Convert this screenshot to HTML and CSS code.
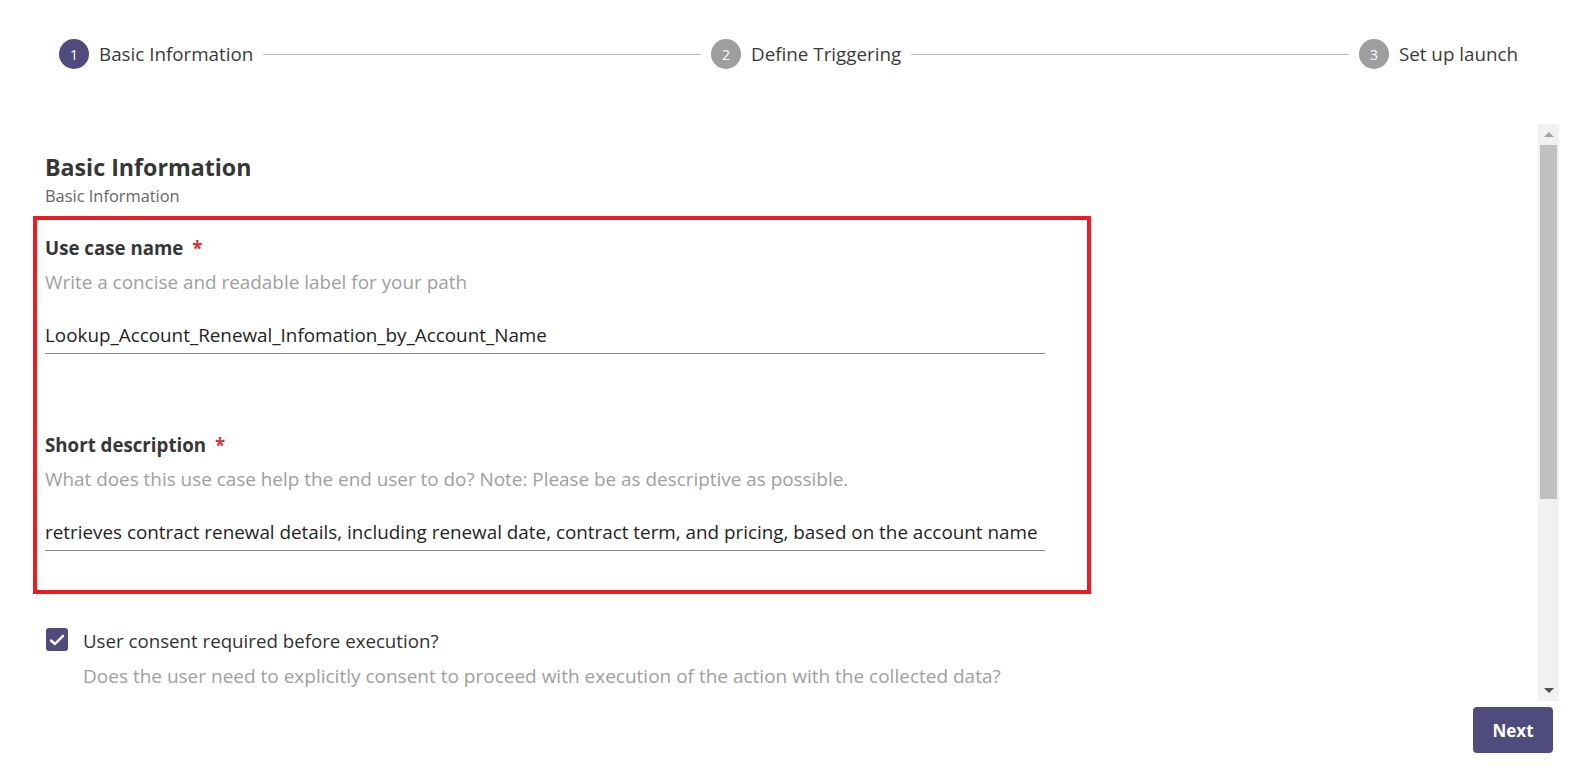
FILE: index.html
```html
<!DOCTYPE html>
<html lang="en">
<head>
<meta charset="utf-8">
<title>Basic Information</title>
<link rel="stylesheet" href="styles.css">
</head>
<body>
<div class="page">
  <div class="stepper">
    <div class="step">
      <span class="step-num active">1</span>
      <span class="step-label">Basic Information</span>
    </div>
    <div class="connector"></div>
    <div class="step">
      <span class="step-num">2</span>
      <span class="step-label">Define Triggering</span>
    </div>
    <div class="connector"></div>
    <div class="step">
      <span class="step-num">3</span>
      <span class="step-label">Set up launch</span>
    </div>
  </div>

  <div class="body">
    <div class="content">
      <div class="section-head">
        <h1 class="title">Basic Information</h1>
        <div class="subtitle">Basic Information</div>
      </div>
      <div class="highlight">
        <div class="field">
          <div class="label">Use case name <span class="req">*</span></div>
          <div class="hint">Write a concise and readable label for your path</div>
          <div class="input">Lookup_Account_Renewal_Infomation_by_Account_Name</div>
        </div>
        <div class="field field-second">
          <div class="label">Short description <span class="req">*</span></div>
          <div class="hint">What does this use case help the end user to do? Note: Please be as descriptive as possible.</div>
          <div class="input">retrieves contract renewal details, including renewal date, contract term, and pricing, based on the account name</div>
        </div>
      </div>
      <div class="consent">
        <span class="checkbox">
          <svg width="18" height="18" viewBox="0 0 18 18"><path d="M3 9.5 L7 13 L15 4.8" fill="none" stroke="#fff" stroke-width="2.5" stroke-linecap="round" stroke-linejoin="round"/></svg>
        </span>
        <div class="consent-text">
          <div class="consent-label">User consent required before execution?</div>
          <div class="consent-hint">Does the user need to explicitly consent to proceed with execution of the action with the collected data?</div>
        </div>
      </div>
    </div>
    <div class="scrollbar">
      <div class="sb-btn"><span class="tri-up"></span></div>
      <div class="sb-thumb"></div>
      <div class="sb-rest"></div>
      <div class="sb-btn"><span class="tri-down"></span></div>
    </div>
  </div>

  <div class="footer">
    <button class="next">Next</button>
  </div>
</div>
</body>
</html>
```

FILE: styles.css
```css
html, body {
  margin: 0;
  padding: 0;
  background: #ffffff;
}
body {
  font-family: "Open Sans", "Noto Sans", sans-serif;
  color: #333333;
}
.page {
  width: 1595px;
  height: 783px;
  display: flex;
  flex-direction: column;
  overflow: hidden;
}

/* stepper */
.stepper {
  display: flex;
  align-items: center;
  padding: 39px 77px 0 59px;
  height: 30px;
  margin-bottom: 55px;
}
.step {
  display: flex;
  align-items: center;
  gap: 10px;
}
.step-num {
  width: 30px;
  height: 30px;
  border-radius: 50%;
  background: #9e9e9e;
  color: #ffffff;
  font-size: 14px;
  display: flex;
  align-items: center;
  justify-content: center;
}
.step-num.active {
  background: #4f4b7c;
}
.step-label {
  font-size: 18.8px;
  color: #3b3b3b;
}
.connector {
  flex: 1;
  height: 1px;
  background: #bdbdbd;
  margin: 0 10px;
}

/* body */
.body {
  display: flex;
  height: 577px;
}
.content {
  flex: 1;
  overflow: hidden;
  padding: 27px 0 0 33px;
}
.section-head {
  padding-left: 12px;
  margin-bottom: 10px;
}
.title {
  margin: 0;
  font-size: 23.2px;
  line-height: 32px;
  font-weight: 700;
  color: #363636;
}
.subtitle {
  font-size: 16.4px;
  line-height: 20px;
  margin-top: 3px;
  color: #666666;
}
.highlight {
  width: 1058px;
  border: 4px solid #ec1c24;
  box-sizing: border-box;
  padding: 16px 42px 39px 8px;
}
.field-second {
  margin-top: 79px;
}
.label {
  font-size: 18.7px;
  line-height: 24px;
  font-weight: 700;
  color: #363636;
}
.req {
  color: #d13438;
  margin-left: 4px;
}
.hint {
  margin-top: 10px;
  font-size: 18.9px;
  line-height: 24px;
  color: #a0a0a0;
}
.input {
  margin-top: 29px;
  font-size: 18.85px;
  line-height: 24px;
  padding-bottom: 6px;
  border-bottom: 1px solid #8a8a8a;
  color: #242424;
  white-space: nowrap;
}

.consent {
  display: flex;
  align-items: flex-start;
  gap: 15px;
  margin: 34px 0 0 13px;
}
.checkbox {
  width: 22px;
  height: 23px;
  border-radius: 3px;
  background: #4f4b7c;
  display: flex;
  align-items: center;
  justify-content: center;
  flex: none;
}
.consent-label {
  font-size: 18.7px;
  line-height: 26px;
  color: #333333;
}
.consent-hint {
  margin-top: 9px;
  font-size: 19px;
  line-height: 26px;
  color: #a0a0a0;
}

/* fake classic scrollbar */
.scrollbar {
  width: 21px;
  margin-right: 36px;
  background: #f1f1f1;
  display: flex;
  flex-direction: column;
  align-items: center;
}
.sb-btn {
  height: 21px;
  width: 100%;
  display: flex;
  align-items: center;
  justify-content: center;
}
.tri-up {
  width: 0;
  height: 0;
  border-left: 5px solid transparent;
  border-right: 5px solid transparent;
  border-bottom: 5px solid #a3a3a3;
}
.tri-down {
  width: 0;
  height: 0;
  border-left: 5px solid transparent;
  border-right: 5px solid transparent;
  border-top: 5px solid #505050;
}
.sb-thumb {
  width: 17px;
  height: 354px;
  background: #c1c1c1;
}
.sb-rest {
  flex: 1;
}

/* footer */
.footer {
  display: flex;
  justify-content: flex-end;
  padding: 6px 42px 0 0;
}
.next {
  width: 80px;
  height: 46px;
  border: none;
  border-radius: 4px;
  background: #4f4b7c;
  color: #ffffff;
  font-family: "Open Sans", "Noto Sans", sans-serif;
  font-size: 17px;
  font-weight: 700;
}
```
